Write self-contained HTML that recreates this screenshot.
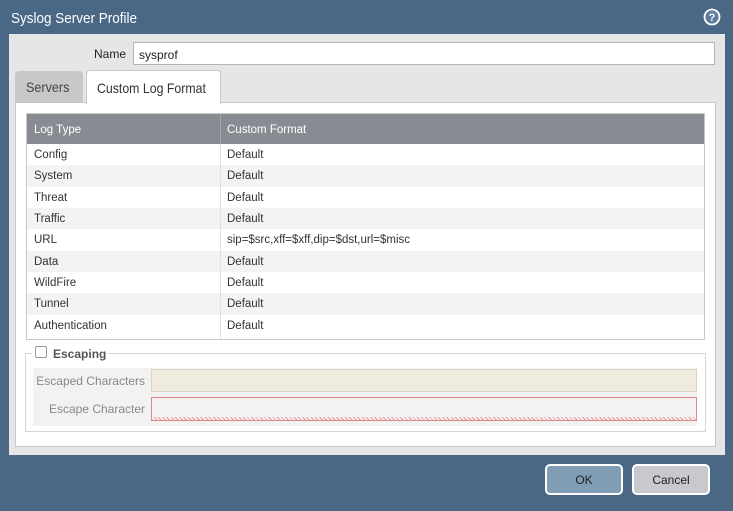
<!DOCTYPE html><html><head><style>
*{box-sizing:border-box;margin:0;padding:0}
body{width:733px;height:511px;background:#4a6786;font-family:"Liberation Sans",sans-serif;position:relative;overflow:hidden;font-size:12px;color:#333}
.a{position:absolute;white-space:nowrap}
.title{left:11px;top:10px;color:#fff;font-size:15px;transform:scaleX(.9);transform-origin:left}
.panel{left:9px;top:34px;width:716px;height:421px;background:#e6e6e6}
.row{position:absolute;left:27px;width:677px;height:21.3px;line-height:23px;font-size:11.5px}
.row span{position:absolute}
</style></head><body>
<div class="a title">Syslog Server Profile</div>
<svg class="a" style="left:703px;top:8px" width="18" height="18"><circle cx="9" cy="9" r="7.5" fill="#5d7b9c" stroke="#fff" stroke-width="1.8"/><text x="9" y="13" text-anchor="middle" fill="#fff" font-size="11" font-weight="bold" font-family="Liberation Sans">?</text></svg>
<div class="a panel"></div>
<div class="a" style="left:94px;top:47px;font-size:12px;color:#222">Name</div>
<div class="a" style="left:133px;top:42px;width:582px;height:23px;background:#fff;border:1px solid #b5b5b5;padding:5px 0 0 5px;color:#222">sysprof</div>
<div class="a" style="left:15px;top:71px;width:68px;height:32px;background:#c8c8c8;border-radius:4px 4px 0 0;color:#444;font-size:14px;padding:8px 0 0 11px"><span style="display:inline-block;transform:scaleX(.9);transform-origin:left">Servers</span></div>
<div class="a" style="left:86px;top:70px;width:135px;height:34px;background:#fff;border:1px solid #c8c8c8;border-bottom:none;border-radius:4px 4px 0 0;font-size:14px;color:#333;padding:9px 0 0 10px;z-index:2"><span style="display:inline-block;transform:scaleX(.88);transform-origin:left">Custom Log Format</span></div>
<div class="a" style="left:15px;top:102px;width:701px;height:345px;background:#fff;border:1px solid #c8c8c8"></div>
<div class="a" style="left:26px;top:113px;width:679px;height:227px;border:1px solid #c8c8c8;background:#fff"></div>
<div class="a" style="left:27px;top:114px;width:677px;height:30px;background:#878c93;color:#fff;font-size:11.5px;line-height:32px"><span style="position:absolute;left:7px">Log Type</span><span style="position:absolute;left:193px;top:0;bottom:0;border-left:1px solid #a2a6ab"></span><span style="position:absolute;left:200px">Custom Format</span></div>
<div class="a" style="left:220px;top:144px;height:195px;border-left:1px solid #e0e0e0;z-index:3"></div>
<div class="row" style="top:144px;background:#fff"><span style="left:7px">Config</span><span style="left:200px">Default</span></div>
<div class="row" style="top:165.3px;background:#f3f3f3"><span style="left:7px">System</span><span style="left:200px">Default</span></div>
<div class="row" style="top:186.6px;background:#fff"><span style="left:7px">Threat</span><span style="left:200px">Default</span></div>
<div class="row" style="top:208px;background:#f3f3f3"><span style="left:7px">Traffic</span><span style="left:200px">Default</span></div>
<div class="row" style="top:229.3px;background:#fff"><span style="left:7px">URL</span><span style="left:200px">sip=$src,xff=$xff,dip=$dst,url=$misc</span></div>
<div class="row" style="top:250.6px;background:#f3f3f3"><span style="left:7px">Data</span><span style="left:200px">Default</span></div>
<div class="row" style="top:272px;background:#fff"><span style="left:7px">WildFire</span><span style="left:200px">Default</span></div>
<div class="row" style="top:293.3px;background:#f3f3f3"><span style="left:7px">Tunnel</span><span style="left:200px">Default</span></div>
<div class="row" style="top:314.6px;background:#fff"><span style="left:7px">Authentication</span><span style="left:200px">Default</span></div>
<div class="a" style="left:25px;top:353px;width:681px;height:79px;border:1px solid #d5d5d5"></div>
<div class="a" style="left:32px;top:344px;width:76px;height:18px;background:#fff"></div>
<div class="a" style="left:35px;top:346px;width:12px;height:12px;border:1px solid #999;border-radius:2px;background:#fff"></div>
<div class="a" style="left:53px;top:347px;font-weight:bold;font-size:12px;color:#555">Escaping</div>
<div class="a" style="left:33px;top:368px;width:664px;height:58px;background:#f2f2f2"></div>
<div class="a" style="right:588px;top:374px;color:#888;font-size:12px">Escaped Characters</div>
<div class="a" style="left:151px;top:369px;width:546px;height:23px;background:#efebdd;border:1px solid #d8d4c6"></div>
<div class="a" style="right:588px;top:402px;color:#888;font-size:12px">Escape Character</div>
<div class="a" style="left:151px;top:397px;width:546px;height:24px;background:#f2f2f2;border:1px solid #d88"></div>
<div class="a" style="left:152px;top:417px;width:544px;height:3px;background:repeating-linear-gradient(45deg,#e99 0 1px,transparent 1px 3px)"></div>
<div class="a" style="left:545px;top:464px;width:78px;height:31px;background:#7f9eb6;border:2px solid #fff;border-radius:5px;text-align:center;line-height:29px;color:#222">OK</div>
<div class="a" style="left:632px;top:464px;width:78px;height:31px;background:#c8c9cc;border:2px solid #fff;border-radius:5px;text-align:center;line-height:29px;color:#222">Cancel</div>
</body></html>
